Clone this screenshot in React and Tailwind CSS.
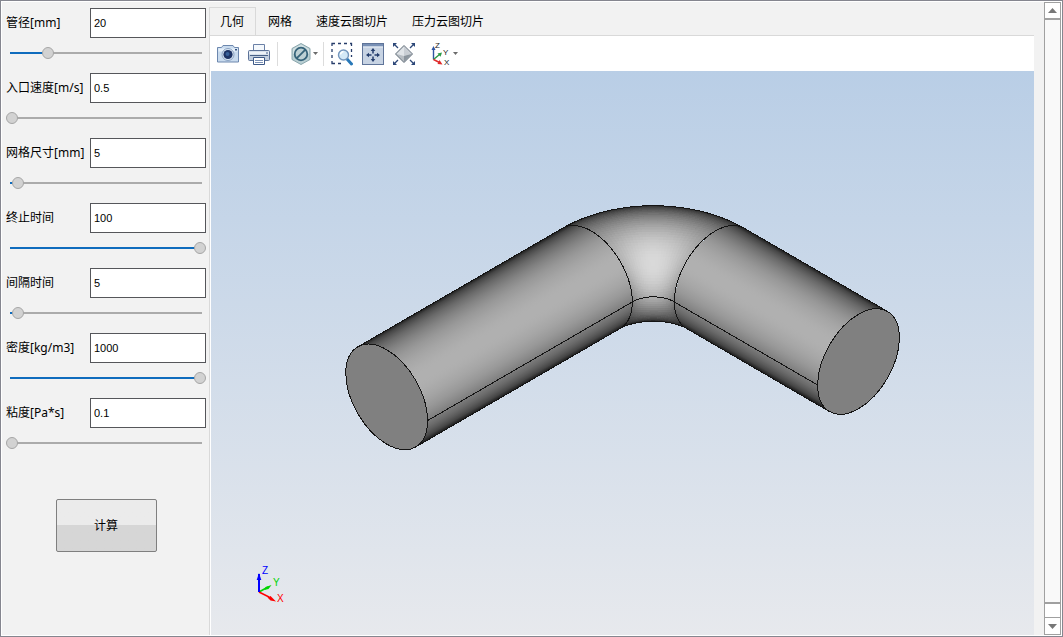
import { useState } from "react";

const FIELDS = [
  { id: "diameter", label: "管径[mm]", value: "20", min: 1, max: 100, step: 1 },
  { id: "velocity", label: "入口速度[m/s]", value: "0.5", min: 0.5, max: 100, step: 0.5 },
  { id: "mesh", label: "网格尺寸[mm]", value: "5", min: 2, max: 100, step: 1 },
  { id: "end", label: "终止时间", value: "100", min: 1, max: 100, step: 1 },
  { id: "interval", label: "间隔时间", value: "5", min: 2, max: 100, step: 1 },
  { id: "density", label: "密度[kg/m3]", value: "1000", min: 1, max: 1000, step: 1 },
  { id: "viscosity", label: "粘度[Pa*s]", value: "0.1", min: 0.1, max: 10, step: 0.1 },
];

const TABS = ["几何", "网格", "速度云图切片", "压力云图切片"];

function Field({ field }) {
  const [value, setValue] = useState(field.value);
  const number = Number(value) || field.min;
  const percent = Math.min(100, Math.max(0, ((number - field.min) / (field.max - field.min)) * 100));
  return (
    <div className="flex flex-col gap-[9px]">
      <div className="flex items-center">
        <label htmlFor={field.id} className="w-[84px] shrink-0 whitespace-nowrap">
          {field.label}
        </label>
        <input
          id={field.id}
          type="text"
          value={value}
          onChange={(e) => setValue(e.target.value)}
          className="h-[30px] min-w-0 flex-1 border border-[#55565a] bg-white px-[3px] font-['Liberation_Sans','Noto_Sans_CJK_SC',sans-serif] text-[11px] text-black outline-none"
        />
      </div>
      <input
        type="range"
        aria-label={field.label}
        min={field.min}
        max={field.max}
        step={field.step}
        value={number}
        onChange={(e) => setValue(e.target.value)}
        style={{
          backgroundImage: `linear-gradient(to right, #0f6cbd ${percent}%, #ababab ${percent}%)`,
        }}
        className="h-3 w-full appearance-none bg-[length:calc(100%-8px)_2px] bg-center bg-no-repeat outline-none [&::-webkit-slider-thumb]:h-3 [&::-webkit-slider-thumb]:w-3 [&::-webkit-slider-thumb]:appearance-none [&::-webkit-slider-thumb]:rounded-full [&::-webkit-slider-thumb]:border [&::-webkit-slider-thumb]:border-[#a6a6a6] [&::-webkit-slider-thumb]:bg-[#d2d2d2]"
      />
    </div>
  );
}

function CameraIcon() {
  return (
    <svg width="24" height="24" viewBox="0 0 24 24" aria-hidden="true">
      <path d="M1.500 5.500h4l1.500-2h10l1.500 2h4v14.500h-21z" fill="#c9dbee" stroke="#6c87ae" />
      <path d="M2.500 6.500h19v3h-19z" fill="#e6f0fa" />
      <circle cx="12" cy="12.500" r="6" fill="#dce8f4" stroke="#8aa2c2" />
      <circle cx="12" cy="12.500" r="4.600" fill="#1c3365" />
      <circle cx="11.500" cy="12" r="2" fill="#38619a" />
      <rect x="19" y="7" width="2" height="1.500" fill="#33517f" />
    </svg>
  );
}

function PrinterIcon() {
  return (
    <svg width="24" height="24" viewBox="0 0 24 24" aria-hidden="true">
      <path d="M6.500 10V2.500h11V10" fill="#f4f8fc" stroke="#6a80a6" />
      <rect x="1.500" y="8.500" width="21" height="10" rx="1" fill="#c2cfdf" stroke="#5c7298" />
      <path d="M2 9.500h20v3H2z" fill="#edf2f8" />
      <path d="M3 13.500h18" stroke="#496187" />
      <path d="M6.500 15.500h11v7h-11z" fill="#fff" stroke="#3e5a88" />
      <path d="M8 18.500h8M8 20.500h8" stroke="#7c92b5" />
      <path d="M19 11h2" stroke="#3e5a88" />
    </svg>
  );
}

function HexIcon() {
  return (
    <svg width="24" height="24" viewBox="0 0 24 24" aria-hidden="true">
      <path d="M12 1.500l9 5v11l-9 5-9-5v-11z" fill="#b9cfd3" stroke="#8aa6ad" />
      <path d="M12 2.500l8 4.500v5H4V7z" fill="#d3e1e3" />
      <circle cx="12" cy="12" r="6.300" fill="#bdd0d4" stroke="#36637a" strokeWidth="1.800" />
      <path d="M7.600 16.400l8.800-8.800" stroke="#36637a" strokeWidth="1.800" />
    </svg>
  );
}

function ZoomAreaIcon() {
  return (
    <svg width="24" height="24" viewBox="0 0 24 24" aria-hidden="true">
      <path
        d="M2 4V1.500h3M8 1.500h3M14 1.500h3M20 1.500h1.500V4M21.500 7v3M21.500 13v2M2 7v3M2 13v3M2 19v2.500H5M8 21.500h3"
        fill="none"
        stroke="#263c6a"
        strokeWidth="1.300"
      />
      <path d="M17 17l4.500 5" stroke="#2878b8" strokeWidth="3" strokeLinecap="round" />
      <circle cx="13.500" cy="13" r="5" fill="#d4e9f7" stroke="#7396bd" strokeWidth="1.400" />
      <path d="M10.500 12.500a3.500 3.500 0 0 1 3-3" fill="none" stroke="#fff" strokeWidth="1.500" />
    </svg>
  );
}

function PanIcon() {
  return (
    <svg width="24" height="24" viewBox="0 0 24 24" aria-hidden="true">
      <rect x="1.500" y="1.500" width="21" height="21" fill="#c7d3e3" stroke="#5f7499" />
      <path d="M2 2h20v2.500H2z" fill="#7890b5" />
      <path d="M2 5h20" stroke="#e9eff6" />
      <path d="M12 8v3.500M12 14.500V18M7 13h3.500M13.500 13H17" stroke="#243d6d" strokeWidth="1.500" />
      <path d="M12 6l2.300 3H9.700zM12 20l2.300-3H9.700zM5 13l3-2.300v4.600zM19 13l-3-2.300v4.600z" fill="#243d6d" />
    </svg>
  );
}

function FitIcon() {
  return (
    <svg width="24" height="24" viewBox="0 0 24 24" aria-hidden="true">
      <path d="M12 3.500L20.500 12 12 20.500 3.500 12z" fill="#b7bdc3" stroke="#626e7a" />
      <path d="M12 4.500L19.500 12l-7.500 2-7.500-2z" fill="#e0e4e8" />
      <path d="M12 4.500L19.500 12l-7.500 2z" fill="#c9ced4" />
      <path d="M12 14l7.500-2-7.500 7.500z" fill="#8b949d" />
      <path d="M2 2l4 4M22 2l-4 4M2 22l4-4M22 22l-4-4" stroke="#2c4778" strokeWidth="1.300" />
      <path d="M1 1h4L1 5zM23 1h-4l4 4zM1 23h4l-4-4zM23 23h-4l4-4z" fill="#2c4778" />
    </svg>
  );
}

function AxesIcon() {
  return (
    <svg width="24" height="24" viewBox="0 0 24 24" aria-hidden="true">
      <path d="M4.500 17.500V6" stroke="#2f55a4" strokeWidth="1.400" />
      <path d="M4.500 4l2 4h-4z" fill="#2f55a4" />
      <path d="M4.500 17.500l6-5" stroke="#2c9a48" strokeWidth="1.400" />
      <path d="M13 10.500l-4.500 1 3 3.200z" fill="#2c9a48" />
      <path d="M4.500 17.500l6 3" stroke="#e02b2b" strokeWidth="1.400" />
      <path d="M13.500 22.500l-5-.5 2-4z" fill="#e02b2b" />
      <g fill="#222" fontFamily="Liberation Sans, sans-serif" fontSize="8">
        <text x="6" y="6">Z</text>
        <text x="14" y="13">Y</text>
        <text x="15" y="23">X</text>
      </g>
    </svg>
  );
}

function Caret() {
  return (
    <svg width="5" height="3" viewBox="0 0 5 3" aria-hidden="true">
      <path d="M0 0h5L2.500 3z" fill="#6b6b6b" />
    </svg>
  );
}

function ToolButton({ label, caret, children }) {
  return (
    <button type="button" aria-label={label} title={label} className="flex items-center">
      {children}
      {caret && <Caret />}
    </button>
  );
}

/* Isometric pipe: two straight cylinders joined by a quarter torus. */
const TUBE = 57.8;
const BEND = 87.5;
const CENTER = [653.3, 314];
const E1 = [0.7071, 0.4082];
const E2 = [-0.7071, 0.4082];
const UP = [0, -0.8165];

function torusPoint(theta, phi) {
  const c = Math.cos(theta);
  const s = Math.sin(theta);
  const radius = BEND + TUBE * Math.cos(phi);
  const lift = TUBE * Math.sin(phi);
  return [
    CENTER[0] - radius * (c * E1[0] + s * E2[0]),
    CENTER[1] - radius * (c * E1[1] + s * E2[1]) + lift * UP[1],
  ];
}

function gray(intensity) {
  const level = Math.round(30 + 187 * Math.pow(Math.max(0, intensity), 1.22));
  return `rgb(${level},${level},${level})`;
}

function path(points) {
  return "M" + points.map((p) => `${p[0].toFixed(2)} ${p[1].toFixed(2)}`).join("L");
}

const T_STEPS = 28;
const P_STEPS = 60;
const thetaAt = (i) => (i / T_STEPS) * (Math.PI / 2);
const phiAt = (theta, k) => Math.atan(Math.cos(theta) + Math.sin(theta)) + (k / P_STEPS) * Math.PI;

const patches = [];
for (let i = 0; i < T_STEPS; i++) {
  for (let k = 0; k < P_STEPS; k++) {
    const a = thetaAt(i);
    const b = thetaAt(i + 1);
    const mid = (a + b) / 2;
    const spread = Math.cos(mid) + Math.sin(mid);
    const light = 0.5774 * Math.sqrt(1 + spread * spread) * Math.sin(((k + 0.5) / P_STEPS) * Math.PI);
    patches.push({
      d: path([
        torusPoint(a, phiAt(a, k)),
        torusPoint(b, phiAt(b, k)),
        torusPoint(b, phiAt(b, k + 1)),
        torusPoint(a, phiAt(a, k + 1)),
      ]) + "Z",
      fill: gray(light),
    });
  }
}

const range = (n) => Array.from({ length: n + 1 }, (_, i) => i);
const outerEdge = path(range(T_STEPS).map((i) => torusPoint(thetaAt(i), phiAt(thetaAt(i), 0))));
const innerEdge = path(range(T_STEPS).map((i) => torusPoint(thetaAt(i), phiAt(thetaAt(i), P_STEPS))));
const seam = path(range(T_STEPS).map((i) => torusPoint(thetaAt(i), Math.PI)));
const leftJoint = path(range(P_STEPS).map((k) => torusPoint(0, phiAt(0, k))));
const rightJoint = path(range(P_STEPS).map((k) => torusPoint(Math.PI / 2, phiAt(Math.PI / 2, k))));

const stops = range(32).map((i) => {
  const u = i / 16 - 1;
  return { offset: i / 32, color: gray(0.8165 * Math.sqrt(Math.max(0, 1 - u * u))) };
});

function PipeModel() {
  return (
    <svg
      viewBox="211 71 823 564"
      className="h-full w-full"
      role="img"
      aria-label="弯管几何模型"
    >
      <defs>
        <linearGradient id="leftPipe" gradientUnits="userSpaceOnUse" x1="562.600" y1="228.200" x2="620.400" y2="328.300">
          {stops.map((s) => (
            <stop key={s.offset} offset={s.offset} stopColor={s.color} />
          ))}
        </linearGradient>
        <linearGradient id="rightPipe" gradientUnits="userSpaceOnUse" x1="744.100" y1="228.200" x2="686.300" y2="328.300">
          {stops.map((s) => (
            <stop key={s.offset} offset={s.offset} stopColor={s.color} />
          ))}
        </linearGradient>
      </defs>
      <g shapeRendering="crispEdges" strokeWidth="0.5">
        {patches.map((p, i) => (
          <path key={i} d={p.d} fill={p.fill} stroke={p.fill} />
        ))}
      </g>
      <g shapeRendering="crispEdges">
        <path d="M357.800 346.900L562.600 228.200A57.800 33.400 60 0 1 620.400 328.300L415.600 447Z" fill="url(#leftPipe)" />
        <path d="M887.400 311.400L744.100 228.200A57.800 33.400 -60 0 0 686.300 328.300L829.600 411.600Z" fill="url(#rightPipe)" />
      </g>
      <g fill="none" stroke="#141414" shapeRendering="crispEdges">
        <path d={outerEdge} />
        <path d={innerEdge} />
        <path d={leftJoint} />
        <path d={rightJoint} />
        <path d={seam} />
        <path d="M357.800 346.900L562.600 228.200M415.600 447L620.400 328.300M427.600 420.600L632.400 301.900" />
        <path d="M887.400 311.400L744.100 228.200M829.600 411.600L686.300 328.300M817.600 385L674.200 301.900" />
      </g>
      <g fill="#808080" stroke="#141414" shapeRendering="crispEdges">
        <ellipse cx="386.700" cy="396.900" rx="57.800" ry="33.400" transform="rotate(60 386.700 396.900)" />
        <ellipse cx="858.500" cy="361.500" rx="57.800" ry="33.400" transform="rotate(-60 858.500 361.500)" />
      </g>
    </svg>
  );
}

function Triad() {
  return (
    <svg width="40" height="44" viewBox="0 0 40 44" className="absolute bottom-[28px] left-[40px]" aria-hidden="true">
      <path d="M8 29l9-5" stroke="#00d400" strokeWidth="1.500" />
      <path d="M20.500 22l-3 4-4 1 1-3z" fill="#00d400" />
      <path d="M8 29l10 5" stroke="#f00" strokeWidth="1.500" />
      <path d="M25 38.500l-5.500-1-3-3 3-1.500z" fill="#f00" />
      <path d="M8 29V11" stroke="#00f" strokeWidth="2" />
      <path d="M8 10l2.300 7H5.700z" fill="#00f" />
      <g fontFamily="Liberation Sans, sans-serif" fontSize="10">
        <text x="11" y="11" fill="#00f">Z</text>
        <text x="22" y="23" fill="#00d400">Y</text>
        <text x="26" y="39" fill="#f00">X</text>
      </g>
    </svg>
  );
}

export default function App() {
  const [tab, setTab] = useState(0);
  return (
    <div className="h-screen border border-[#85868f] bg-white p-px font-['Noto_Sans','Noto_Sans_CJK_SC',sans-serif] text-xs text-black">
      <div className="flex h-full bg-[#f2f2f2]">
        <aside className="flex w-[207px] shrink-0 flex-col pt-[6px] pr-[3px] pl-1">
          <form className="flex flex-col gap-[14px]" onSubmit={(e) => e.preventDefault()}>
            {FIELDS.map((f) => (
              <Field key={f.id} field={f} />
            ))}
            <button
              type="submit"
              className="mt-9 h-[53px] w-[101px] self-center rounded-xs border border-[#7f7f7f] bg-linear-to-b from-[#ebebeb] from-50% to-[#d6d6d6] to-50%"
            >
              计算
            </button>
          </form>
        </aside>

        <main className="mr-[10px] flex min-w-0 flex-1 flex-col pt-[5px]">
          <div role="tablist" className="flex h-[29px] shrink-0 border-b border-l border-[#d9d9d9]">
            {TABS.map((name, i) => (
              <button
                key={name}
                type="button"
                role="tab"
                aria-selected={i === tab}
                onClick={() => setTab(i)}
                className={
                  i === tab
                    ? "border-t border-r border-[#d9d9d9] pr-[11px] pl-[10px]"
                    : "border-t border-transparent px-3"
                }
              >
                {name}
              </button>
            ))}
          </div>
          <div className="flex min-h-0 flex-1 flex-col border-l border-[#d9d9d9] bg-white">
            <div role="toolbar" className="flex h-[35px] shrink-0 items-center pl-[6px]">
              <div className="flex gap-[7px]">
                <ToolButton label="截图"><CameraIcon /></ToolButton>
                <ToolButton label="打印"><PrinterIcon /></ToolButton>
              </div>
              <div className="ml-[6px] h-6 w-px bg-[#dcdcdc]" />
              <div className="ml-[11px]">
                <ToolButton label="剖切" caret><HexIcon /></ToolButton>
              </div>
              <div className="ml-[5px] h-6 w-px bg-[#dcdcdc]" />
              <div className="ml-[6px] flex gap-[7px]">
                <ToolButton label="框选缩放"><ZoomAreaIcon /></ToolButton>
                <ToolButton label="平移"><PanIcon /></ToolButton>
                <ToolButton label="适应窗口"><FitIcon /></ToolButton>
              </div>
              <div className="ml-[13px]">
                <ToolButton label="视图方向" caret><AxesIcon /></ToolButton>
              </div>
            </div>
            <div className="relative ml-px min-h-0 flex-1 bg-linear-to-b from-[#b9cee6] to-[#e7e9ed]">
              <PipeModel />
              <Triad />
            </div>
          </div>
        </main>

        <div className="flex w-[17px] shrink-0 flex-col border border-[#a0a0a0] bg-white">
          <button type="button" aria-label="向上滚动" className="flex h-[15px] items-center justify-center">
            <svg width="9" height="5" viewBox="0 0 9 5" aria-hidden="true">
              <path d="M4.500 0L9 5H0z" fill="#777" />
            </svg>
          </button>
          <div className="flex-1 border-y-2 border-[#a0a0a0] bg-[#f9f9f9]" />
          <div className="h-[13px]" />
          <button
            type="button"
            aria-label="向下滚动"
            className="flex h-[17px] items-center justify-center border-t border-[#a0a0a0]"
          >
            <svg width="9" height="5" viewBox="0 0 9 5" aria-hidden="true">
              <path d="M0 0h9L4.500 5z" fill="#777" />
            </svg>
          </button>
        </div>
      </div>
    </div>
  );
}
